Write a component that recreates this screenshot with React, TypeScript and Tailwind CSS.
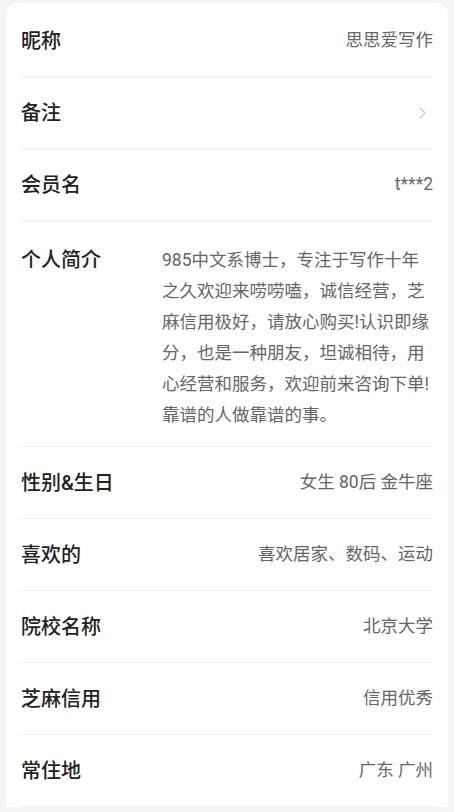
const rows: { label: string; value: string }[] = [
  { label: "性别&生日", value: "女生 80后 金牛座" },
  { label: "喜欢的", value: "喜欢居家、数码、运动" },
  { label: "院校名称", value: "北京大学" },
  { label: "芝麻信用", value: "信用优秀" },
  { label: "常住地", value: "广东 广州" },
];

function Row({ label, children }: { label: string; children?: React.ReactNode }) {
  return (
    <div className="flex h-[72px] items-center justify-between border-b border-[#f1f1f1]">
      <span className="text-[20px] font-medium text-[#222]">{label}</span>
      {children}
    </div>
  );
}

export default function App() {
  return (
    <div
      className="min-h-[812px] bg-[#f5f5f5] px-[6px] pt-[3px]"
      style={{ fontFamily: 'Roboto, "Noto Sans CJK SC", sans-serif' }}
    >
      <div className="rounded-t-xl bg-white px-[15px] pt-[2px]">
        <Row label="昵称">
          <span className="text-[17.5px] text-[#666]">思思爱写作</span>
        </Row>
        <Row label="备注">
          <svg width="10" height="14" viewBox="0 0 10 14" className="mr-[5px]">
            <path d="M2 2l5 5-5 5" fill="none" stroke="#cfcfcf" strokeWidth="1.6" strokeLinecap="round" strokeLinejoin="round" />
          </svg>
        </Row>
        <Row label="会员名">
          <span className="text-[17.5px] text-[#666]">t***2</span>
        </Row>

        <div className="flex items-start border-b border-[#f1f1f1] pt-[24px] pb-[15px]">
          <span className="w-[141px] shrink-0 text-[20px] font-medium leading-[31px] text-[#222]">个人简介</span>
          <p className="w-[272px] text-[17.5px] leading-[31px] text-[#666]">
            985中文系博士，专注于写作十年之久欢迎来唠唠嗑，诚信经营，芝麻信用极好，请放心购买!认识即缘分，也是一种朋友，坦诚相待，用心经营和服务，欢迎前来咨询下单!靠谱的人做靠谱的事。
          </p>
        </div>

        {rows.map((r) => (
          <Row key={r.label} label={r.label}>
            <span className="text-[17.5px] text-[#666]">{r.value}</span>
          </Row>
        ))}
      </div>
    </div>
  );
}
